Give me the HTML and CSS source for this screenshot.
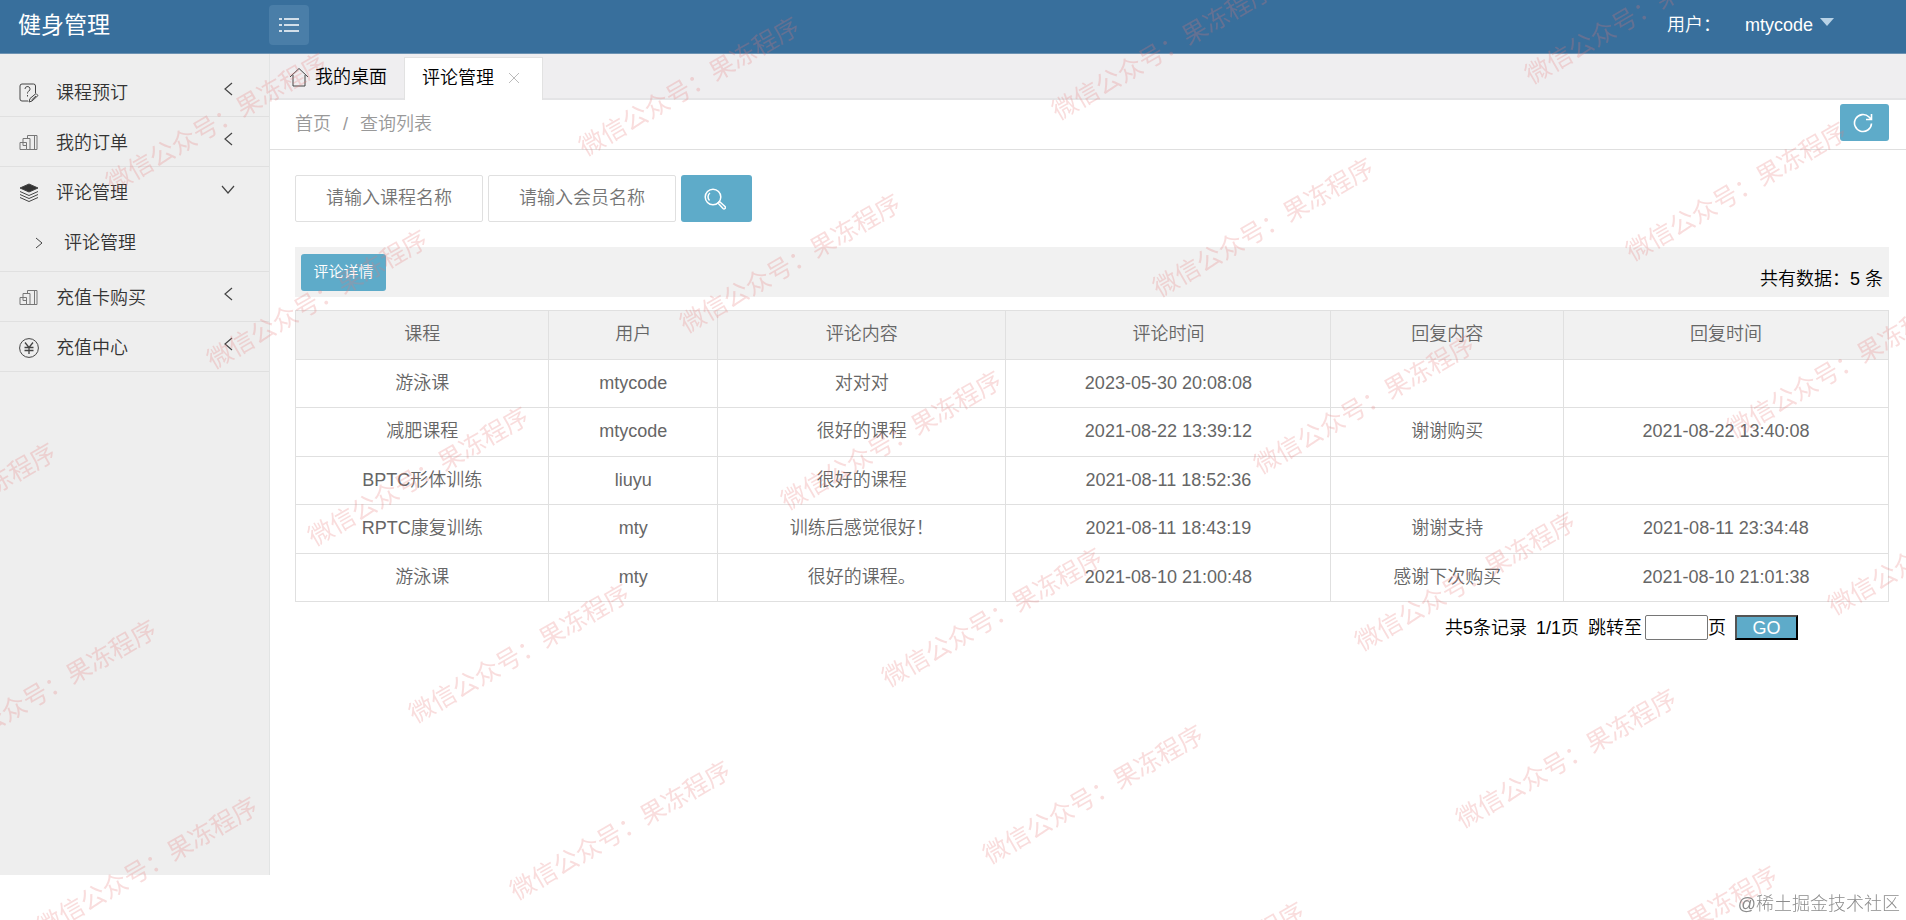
FILE: index.html
```html
<!DOCTYPE html>
<html lang="zh-CN">
<head>
<meta charset="utf-8">
<title>健身管理</title>
<link rel="stylesheet" href="styles.css">
</head>
<body>
<header class="topbar">
  <h1 class="brand">健身管理</h1>
  <button class="toggle" type="button" aria-label="菜单">
    <svg width="22" height="18" viewBox="0 0 22 18" fill="none" stroke="#fff" stroke-width="1.6"><path d="M1 3h3M6 3h15M1 9h3M6 9h15M1 15h3M6 15h15"/></svg>
  </button>
  <div class="account">
    <span>用户：</span>
    <button class="user" type="button">mtycode<span class="caret"></span></button>
  </div>
</header>
<div class="layout">
  <nav class="sidebar">
    <ul class="menu">
      <li class="item"><a class="link" href="#">
        <svg class="icon" viewBox="0 0 20 20"><path d="M9 18H3a2 2 0 0 1-2-2V3a2 2 0 0 1 2-2h11.500a2 2 0 0 1 2 2v7M6 6a2.500 2.500 0 1 1 3.700 2.200c-.9.500-1.200 1-1.200 2.300M8.500 12v1.500M10 19l1-3.500 6-5 2 2-6 5.500zM12.500 17l4.500-4"/></svg>
        <span>课程预订</span><svg class="arrow" viewBox="0 0 14 14"><path d="M11 1 4 7l7 6"/></svg></a></li>
      <li class="item"><a class="link" href="#">
        <svg class="icon pale" viewBox="0 0 20 20"><path d="M1 9.500h6.500v7H1zM4 9.500v-4h7v11H7.500M8.500 5.500v-3H18v14h-7M15.500 2.500v14M4 9.500v3h3.500"/></svg>
        <span>我的订单</span><svg class="arrow" viewBox="0 0 14 14"><path d="M11 1 4 7l7 6"/></svg></a></li>
      <li class="item open"><a class="link" href="#">
        <svg class="icon" viewBox="0 0 20 20"><path class="solid" d="m10 1 9 4-9 4-9-4z"/><path d="m1 8.500 9 4 9-4M1 11.500l9 4 9-4M1 14.500l9 4 9-4"/></svg>
        <span>评论管理</span><svg class="arrow" viewBox="0 0 14 14"><path d="m1 4 6 7 6-7"/></svg></a>
        <a class="sublink" href="#"><svg class="bullet" viewBox="0 0 8 12"><path d="m1 1 6 5-6 5"/></svg><span>评论管理</span></a></li>
      <li class="item"><a class="link" href="#">
        <svg class="icon pale" viewBox="0 0 20 20"><path d="M1 9.500h6.500v7H1zM4 9.500v-4h7v11H7.500M8.500 5.500v-3H18v14h-7M15.500 2.500v14M4 9.500v3h3.500"/></svg>
        <span>充值卡购买</span><svg class="arrow" viewBox="0 0 14 14"><path d="M11 1 4 7l7 6"/></svg></a></li>
      <li class="item"><a class="link" href="#">
        <svg class="icon" viewBox="0 0 20 20"><circle cx="10" cy="10" r="9.400"/><path stroke-width="1.300" d="m6 4.500 4 5 4-5M10 9.500V16M5.500 9.500h9M5.500 12.500h9"/></svg>
        <span>充值中心</span><svg class="arrow" viewBox="0 0 14 14"><path d="M11 1 4 7l7 6"/></svg></a></li>
    </ul>
  </nav>
  <main class="main">
    <div class="tabs">
      <a class="tab" href="#"><svg class="icon" viewBox="0 0 20 20"><path d="M1 10 10 1.500 19 10M4 8v11h12V8"/></svg><span>我的桌面</span></a>
      <div class="tab active"><span>评论管理</span><button class="close" type="button" aria-label="关闭"><svg width="12" height="12" viewBox="0 0 12 12" stroke="#bbb"><path d="m1 1 10 10M11 1 1 11"/></svg></button></div>
    </div>
    <div class="crumbs">
      <a href="#">首页</a><span>/</span><a href="#">查询列表</a>
      <button class="btn refresh" type="button" aria-label="刷新"><svg width="20" height="20" viewBox="0 0 20 20" fill="none" stroke="#fff" stroke-width="1.600"><path d="M18.500 10.500A8.500 8.500 0 1 1 16 4l2 2M18.500 1v5.500H13"/></svg></button>
    </div>
    <div class="content">
      <form class="search">
        <input class="field" type="text" placeholder="请输入课程名称" aria-label="课程名称">
        <input class="field" type="text" placeholder="请输入会员名称" aria-label="会员名称">
        <button class="btn find" type="button" aria-label="搜索"><svg width="22" height="22" viewBox="0 0 22 22" fill="none" stroke="#fff" stroke-width="1.500"><circle cx="9" cy="9" r="7.800"/><path d="M5.500 12.500A5 5 0 0 1 6 5M14 15l1.500-1.500 5.500 5a1.400 1.400 0 0 1-2 2z"/></svg></button>
      </form>
      <div class="toolbar">
        <button class="btn detail" type="button">评论详情</button>
        <span class="total">共有数据：5 条</span>
      </div>
      <table class="grid">
        <colgroup><col class="c-course"><col class="c-user"><col class="c-text"><col class="c-time"><col class="c-reply"><col class="c-time"></colgroup>
        <thead><tr><th>课程</th><th>用户</th><th>评论内容</th><th>评论时间</th><th>回复内容</th><th>回复时间</th></tr></thead>
        <tbody>
          <tr><td>游泳课</td><td>mtycode</td><td>对对对</td><td>2023-05-30 20:08:08</td><td></td><td></td></tr>
          <tr><td>减肥课程</td><td>mtycode</td><td>很好的课程</td><td>2021-08-22 13:39:12</td><td>谢谢购买</td><td>2021-08-22 13:40:08</td></tr>
          <tr><td>BPTC形体训练</td><td>liuyu</td><td>很好的课程</td><td>2021-08-11 18:52:36</td><td></td><td></td></tr>
          <tr><td>RPTC康复训练</td><td>mty</td><td>训练后感觉很好！</td><td>2021-08-11 18:43:19</td><td>谢谢支持</td><td>2021-08-11 23:34:48</td></tr>
          <tr><td>游泳课</td><td>mty</td><td>很好的课程。</td><td>2021-08-10 21:00:48</td><td>感谢下次购买</td><td>2021-08-10 21:01:38</td></tr>
        </tbody>
      </table>
      <form class="pager">
        <span>共5条记录</span><span>1/1页</span>
        <label class="jump">跳转至<input class="page" type="text">页</label>
        <button class="go" type="button">GO</button>
      </form>
    </div>
  </main>
</div>
<svg class="watermark" aria-hidden="true">
  <g transform="translate(-12 8)">
  <text transform="translate(1571 990) rotate(-30)">微信公众号：果冻程序</text>
  <text transform="translate(1470 813) rotate(-30)">微信公众号：果冻程序</text>
  <text transform="translate(1369 636) rotate(-30)">微信公众号：果冻程序</text>
  <text transform="translate(1268 459) rotate(-30)">微信公众号：果冻程序</text>
  <text transform="translate(1167 282) rotate(-30)">微信公众号：果冻程序</text>
  <text transform="translate(1066 105) rotate(-30)">微信公众号：果冻程序</text>
  <text transform="translate(1842 600) rotate(-30)">微信公众号：果冻程序</text>
  <text transform="translate(1741 423) rotate(-30)">微信公众号：果冻程序</text>
  <text transform="translate(1640 246) rotate(-30)">微信公众号：果冻程序</text>
  <text transform="translate(1539 69) rotate(-30)">微信公众号：果冻程序</text>
  <text transform="translate(1098 1026) rotate(-30)">微信公众号：果冻程序</text>
  <text transform="translate(997 849) rotate(-30)">微信公众号：果冻程序</text>
  <text transform="translate(896 672) rotate(-30)">微信公众号：果冻程序</text>
  <text transform="translate(795 495) rotate(-30)">微信公众号：果冻程序</text>
  <text transform="translate(694 318) rotate(-30)">微信公众号：果冻程序</text>
  <text transform="translate(593 141) rotate(-30)">微信公众号：果冻程序</text>
  <text transform="translate(524 885) rotate(-30)">微信公众号：果冻程序</text>
  <text transform="translate(423 708) rotate(-30)">微信公众号：果冻程序</text>
  <text transform="translate(322 531) rotate(-30)">微信公众号：果冻程序</text>
  <text transform="translate(221 354) rotate(-30)">微信公众号：果冻程序</text>
  <text transform="translate(120 177) rotate(-30)">微信公众号：果冻程序</text>
  <text transform="translate(51 921) rotate(-30)">微信公众号：果冻程序</text>
  <text transform="translate(-50 744) rotate(-30)">微信公众号：果冻程序</text>
  <text transform="translate(-151 567) rotate(-30)">微信公众号：果冻程序</text>
  </g>
</svg>
<div class="credit">@稀土掘金技术社区</div>
</body>
</html>
```
FILE: styles.css
```css
* { box-sizing: border-box; }
body {
  margin: 0;
  min-height: 100vh;
  background: #fff;
  color: #000;
  font: 350 18px/24px "Liberation Sans", "Noto Sans CJK SC", sans-serif;
}
a { color: inherit; text-decoration: none; }
button, input { font: inherit; color: inherit; }
button { cursor: pointer; padding: 0; border: 0; background: none; }
svg { display: block; flex: none; }

.topbar {
  display: flex;
  align-items: center;
  height: 54px;
  padding: 0 72px 3px 18px;
  background: #386f9c;
  border-bottom: 1px solid #6d93b3;
  color: #fff;
}
.brand { width: 251px; margin: 0; font-size: 23px; font-weight: 400; line-height: 30px; }
.toggle {
  display: flex;
  align-items: center;
  justify-content: center;
  width: 40px;
  height: 40px;
  border-radius: 4px;
  background: #4a7ea8;
}
.account { display: flex; gap: 24px; margin-left: auto; }
.user { display: flex; gap: 7px; }
.caret { margin-top: 5px; border: 7px solid transparent; border-top: 8px solid #b8d2e6; border-bottom: 0; }

.layout { display: flex; align-items: flex-start; }
.sidebar {
  flex: none;
  width: 270px;
  min-height: calc(100vh - 99px);
  padding-top: 13px;
  background: #eee;
  border-right: 1px solid #e2e4e4;
  color: #333;
}
.menu { margin: 0; padding: 0; list-style: none; }
.item { border-bottom: 1px solid #e0e0e0; }
.link { display: flex; align-items: center; height: 49px; padding: 2px 34px 0 19px; gap: 17px; }
.open { padding-bottom: 1px; }
.icon { width: 20px; height: 20px; fill: none; stroke: #444; }
.icon .solid { fill: #333; }
.pale { stroke: #777; }
.arrow { width: 14px; height: 14px; margin: 0 0 8px auto; fill: none; stroke: #444; stroke-width: 1.2; }
.sublink { display: flex; align-items: center; gap: 21px; height: 54px; padding-left: 35px; }
.bullet { width: 8px; height: 12px; fill: none; stroke: #444; }

.main { flex: 1; min-width: 0; }
.tabs {
  display: flex;
  align-items: flex-end;
  height: 46px;
  padding-left: 1px;
  background: #efeef0;
  border-bottom: 2px solid #e4e4e6;
}
.tab { display: flex; align-items: center; gap: 6px; height: 43px; padding: 0 17px 3px 18px; margin-bottom: -2px; }
.active { gap: 12px; padding: 0 20px 3px 17px; background: #fff; border: 1px solid #e2e2e2; border-bottom: 0; }
.close { display: flex; padding: 2px; }
.crumbs {
  display: flex;
  align-items: center;
  gap: 12px;
  height: 50px;
  padding: 0 17px 2px 25px;
  border-bottom: 1px solid #dfdfdf;
  color: #999;
}
.btn {
  display: flex;
  align-items: center;
  justify-content: center;
  background: #5eabc9;
  color: #fff;
  border-radius: 3px;
}
.refresh { width: 49px; height: 37px; margin: 0 0 2px auto; padding-right: 3px; }

.content { padding: 25px 17px 0 25px; }
.search { display: flex; gap: 5px; margin-bottom: 25px; }
.field { width: 188px; height: 47px; padding: 0 12px; border: 1px solid #e0e0e0; border-radius: 2px; text-align: center; }
.field::placeholder { color: #757575; }
.find { width: 71px; height: 47px; padding-right: 3px; }
.toolbar {
  display: flex;
  justify-content: space-between;
  align-items: center;
  height: 50px;
  padding: 0 6px;
  margin-bottom: 13px;
  background: #f1f1f1;
}
.detail { width: 85px; height: 37px; font-size: 15px; }
.total { padding-top: 14px; }

.grid { width: 100%; table-layout: fixed; border-collapse: collapse; color: #666; }
.grid th, .grid td { height: 49px; padding: 0 8px 2px; border: 1px solid #e0e0e0; text-align: center; font-weight: inherit; }
.grid th { background: #f1f1f1; }
.grid tbody tr:nth-child(odd) td { height: 48px; }
.c-course { width: 15.9%; }
.c-user { width: 10.6%; }
.c-text { width: 18.1%; }
.c-time { width: 20.4%; }
.c-reply { width: 14.6%; }

.pager { display: flex; justify-content: flex-end; align-items: center; gap: 9px; padding: 13px 91px 0 0; }
.jump { display: flex; align-items: center; }
.page { width: 63px; height: 25px; margin-left: 3px; border: 1px solid #767676; border-radius: 2px; }
.go { width: 63px; height: 25px; border: 2px outset #000; background: #5eabc9; color: #fff; line-height: 20px; }

.watermark { position: fixed; inset: 0; width: 100%; height: 100%; pointer-events: none; }
.watermark text { fill: rgba(230, 120, 120, 0.25); font-size: 25px; font-weight: 400; dominant-baseline: central; }
.credit { position: fixed; right: 6px; bottom: 4px; color: #8c8c8c; font-weight: 300; }
```
